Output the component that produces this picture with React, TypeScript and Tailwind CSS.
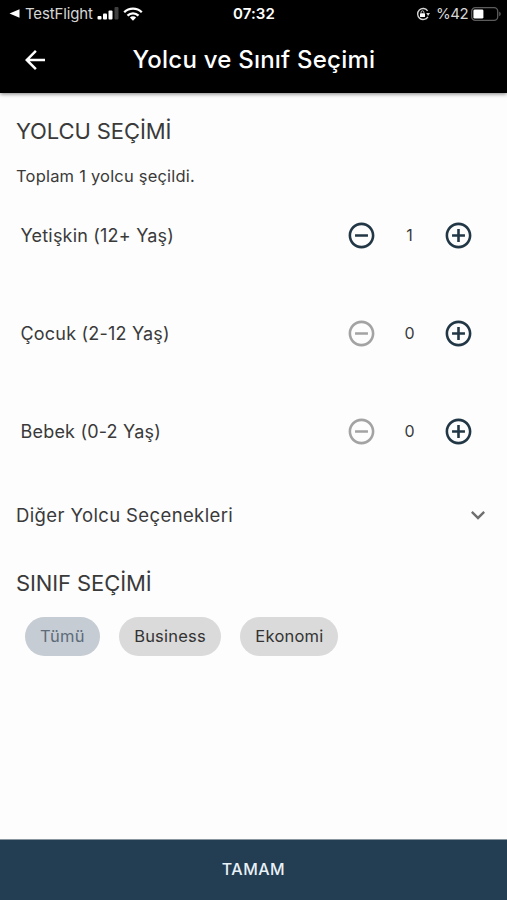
import React, { useState } from "react";
import {
  MdAddCircleOutline,
  MdArrowBack,
  MdExpandMore,
  MdRemoveCircleOutline,
} from "react-icons/md";

const passengerTypes = [
  { id: "adult", label: "Yetişkin (12+ Yaş)", min: 1 },
  { id: "child", label: "Çocuk (2-12 Yaş)", min: 0 },
  { id: "infant", label: "Bebek (0-2 Yaş)", min: 0 },
];

const cabinClasses = ["Tümü", "Business", "Ekonomi"];

function StatusBar() {
  return (
    <div className="relative flex h-[27px] items-center justify-between pl-[9px] pr-[6px] text-white">
      <div className="flex items-center">
        <svg width="11" height="9" viewBox="0 0 11 9" fill="currentColor">
          <path d="M0.5 4.5 10.5 0.3v8.4z" />
        </svg>
        <span className="ml-[5px] w-[72px] whitespace-nowrap text-[15px] leading-[20px] tracking-[-0.15px] text-[#d6d6d6]">
          TestFlight
        </span>
        <svg width="22" height="13" viewBox="0 0 22 13" fill="currentColor">
          <rect x="0.5" y="9" width="4" height="3.5" rx="1" />
          <rect x="6" y="6.5" width="4" height="6" rx="1" />
          <rect x="11.5" y="3.5" width="4" height="9" rx="1" />
          <rect x="17.5" y="0" width="4" height="12.5" rx="1" opacity="0.25" />
        </svg>
        <svg className="ml-[4px]" width="20" height="14" viewBox="0 0 20 14" fill="none" stroke="currentColor" strokeWidth="2.3">
          <path d="M1.2 5.2a12.6 12.6 0 0 1 17.6 0" />
          <path d="M4.5 8.6a7.9 7.9 0 0 1 11 0" />
          <path d="M10 13.7 6.9 10.6a4.4 4.4 0 0 1 6.2 0z" fill="currentColor" stroke="none" />
        </svg>
      </div>

      <span className="absolute left-[233px] top-[4px] text-[15px] font-semibold leading-[20px] tracking-[0.1px]">
        07:32
      </span>

      <div className="flex items-center">
        <svg width="14" height="14" viewBox="0 0 14 14" fill="none" stroke="#d6d6d6">
          <path d="M11.6 3.8a5.5 5.5 0 1 0 .3 6" strokeWidth="1.4" />
          <path d="M10.2 6h3.8l-1.9 2.9z" fill="#d6d6d6" stroke="none" />
          <rect x="4" y="6.2" width="5" height="3.9" rx="0.6" fill="#fff" stroke="none" />
          <path d="M5.1 6.4V5.2a1.4 1.4 0 0 1 2.8 0v1.2" strokeWidth="0.9" />
        </svg>
        <span className="ml-[6px] w-[35px] whitespace-nowrap text-[15px] leading-[20px] tracking-[-0.5px] text-[#d6d6d6]">
          %42
        </span>
        <svg width="30" height="14" viewBox="0 0 30 14" fill="none">
          <rect x="0.7" y="0.7" width="26" height="12.6" rx="3.6" stroke="#5c5c5c" strokeWidth="1.3" />
          <rect x="2.4" y="2.4" width="10" height="9.2" rx="1.4" fill="#fff" />
          <path d="M28.2 4.8c2 .6 2 3.8 0 4.4z" fill="#5c5c5c" />
        </svg>
      </div>
    </div>
  );
}

function App() {
  const [counts, setCounts] = useState<Record<string, number>>({
    adult: 1,
    child: 0,
    infant: 0,
  });
  const [cabin, setCabin] = useState("Tümü");

  const total = Object.values(counts).reduce((a, b) => a + b, 0);

  const change = (id: string, step: number) => {
    setCounts((prev) => ({ ...prev, [id]: prev[id] + step }));
  };

  return (
    <div className="flex h-[900px] w-[507px] flex-col overflow-hidden bg-[#fdfdfd] font-['Inter',sans-serif] text-[#3a3a3a]">
      <header className="h-[93px] shrink-0 bg-black shadow-[0_1px_4px_rgba(0,0,0,0.5)]">
        <StatusBar />
        <div className="flex h-[66px] items-center pl-[20px]">
          <button className="text-white">
            <MdArrowBack size={30} />
          </button>
          <h1 className="ml-[82.5px] whitespace-nowrap text-[24px] font-medium tracking-[0.22px] text-white">
            Yolcu ve Sınıf Seçimi
          </h1>
        </div>
      </header>

      <main className="flex-1 px-4 pt-[22px]">
        <h2 className="text-[22px] leading-[32px] tracking-[-0.1px]">YOLCU SEÇİMİ</h2>
        <p className="mt-[17px] text-[16.5px] leading-[24px] tracking-[0.2px]">
          Toplam {total} yolcu şeçildi.
        </p>

        <div className="-mt-[2px] flex flex-col">
          {passengerTypes.map((p) => {
            const disabled = counts[p.id] <= p.min && p.min === 0;
            return (
              <div key={p.id} className="flex h-[98px] items-center pl-[4.5px]">
                <span className="flex-1 text-[18px] tracking-[0.2px]">{p.label}</span>
                <button
                  disabled={disabled}
                  onClick={() => change(p.id, -1)}
                  className={disabled ? "text-[#a3a3a3]" : "text-[#223746]"}
                >
                  <MdRemoveCircleOutline size={31} />
                </button>
                <span className="w-[66px] text-center text-[16px]">{counts[p.id]}</span>
                <button onClick={() => change(p.id, 1)} className="mr-[17.5px] text-[#223746]">
                  <MdAddCircleOutline size={31} />
                </button>
              </div>
            );
          })}
        </div>

        <button className="mt-[19px] flex h-[32px] w-full items-center justify-between">
          <span className="pt-[2px] text-[18.5px] tracking-[0.38px]">Diğer Yolcu Seçenekleri</span>
          <MdExpandMore size={28} className="-mr-[1px] text-[#6f6f6f]" />
        </button>

        <h2 className="mt-[36px] text-[22px] leading-[32px] tracking-[-0.1px]">SINIF SEÇİMİ</h2>
        <div className="ml-[9px] mt-[17.5px] flex gap-[19.5px]">
          {cabinClasses.map((c) => (
            <button
              key={c}
              onClick={() => setCabin(c)}
              className={`h-[39px] rounded-full px-[15px] text-[16.5px] tracking-[0.21px] ${
                c === cabin ? "bg-[#c6ccd3] text-[#5d6b7a]" : "bg-[#dadada] text-[#333333]"
              }`}
            >
              {c}
            </button>
          ))}
        </div>
      </main>

      <button className="h-[61px] shrink-0 border-t border-[#8996a0] bg-[#233d52] pb-[2px] text-[16px] font-medium tracking-[0.5px] text-[#e9f1f8]">
        TAMAM
      </button>
    </div>
  );
}

export default App;
